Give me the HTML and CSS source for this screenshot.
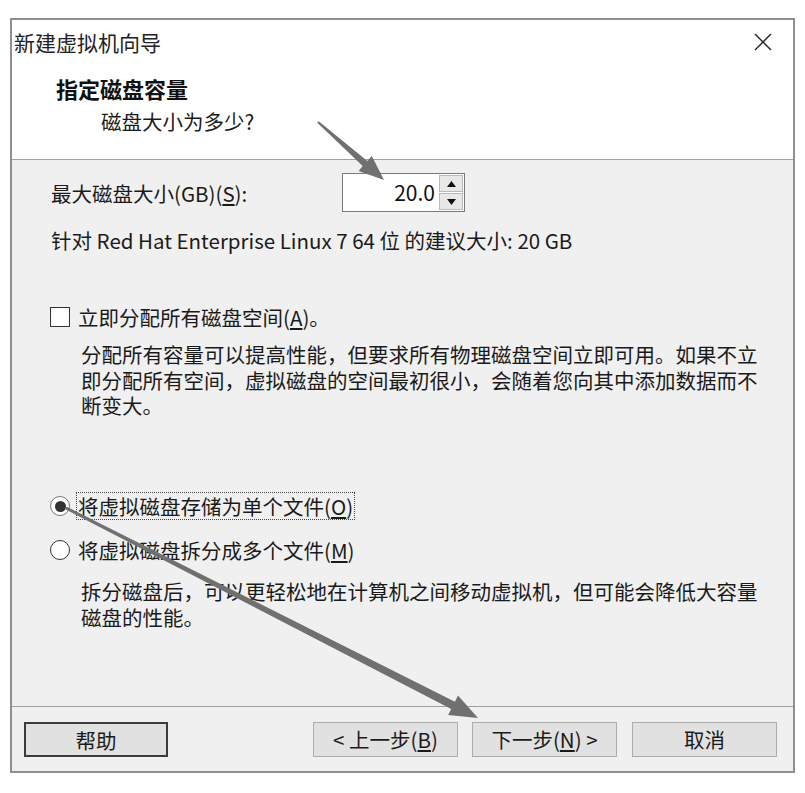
FILE: index.html
```html
<!DOCTYPE html>
<html lang="zh-CN">
<head>
<meta charset="utf-8">
<title>新建虚拟机向导</title>
<link rel="stylesheet" href="styles.css">
</head>
<body>
<div class="window">
  <div class="titlebar">
    <span class="title">新建虚拟机向导</span>
    <svg class="close" width="18" height="18" viewBox="0 0 18 18"><path d="M1 1 L17 17 M17 1 L1 17" stroke="#222" stroke-width="1.4" fill="none"/></svg>
  </div>
  <div class="header">
    <div class="heading">指定磁盘容量</div>
    <div class="subheading">磁盘大小为多少?</div>
  </div>
  <div class="content">
    <div class="size-row">
      <span class="size-label">最大磁盘大小(GB)(<u>S</u>):</span>
      <div class="spin">
        <div class="spin-value">20.0</div>
        <div class="spin-btns">
          <div class="spin-btn"><svg width="9" height="6" viewBox="0 0 9 6"><path d="M0 6 L4.5 0 L9 6 Z" fill="#111"/></svg></div>
          <div class="spin-btn"><svg width="9" height="6" viewBox="0 0 9 6"><path d="M0 0 L4.5 6 L9 0 Z" fill="#111"/></svg></div>
        </div>
      </div>
    </div>
    <div class="info">针对 Red Hat Enterprise Linux 7 64 位 的建议大小: 20 GB</div>
    <div class="option check-row">
      <span class="checkbox"></span>
      <span class="opt-label">立即分配所有磁盘空间(<u>A</u>)。</span>
    </div>
    <p class="desc desc-alloc">分配所有容量可以提高性能，但要求所有物理磁盘空间立即可用。如果不立<br>即分配所有空间，虚拟磁盘的空间最初很小，会随着您向其中添加数据而不<br>断变大。</p>
    <div class="option radio-row first">
      <span class="radio checked"><span class="dot"></span></span>
      <span class="opt-label focused">将虚拟磁盘存储为单个文件(<u>O</u>)</span>
    </div>
    <div class="option radio-row second">
      <span class="radio"></span>
      <span class="opt-label">将虚拟磁盘拆分成多个文件(<u>M</u>)</span>
    </div>
    <p class="desc desc-split">拆分磁盘后，可以更轻松地在计算机之间移动虚拟机，但可能会降低大容量<br>磁盘的性能。</p>
  </div>
  <div class="footer">
    <button class="btn btn-default">帮助</button>
    <div class="spacer"></div>
    <button class="btn">&lt; 上一步(<u>B</u>)</button>
    <button class="btn">下一步(<u>N</u>) &gt;</button>
    <button class="btn btn-cancel">取消</button>
  </div>
</div>
<svg class="annotations" width="805" height="793" viewBox="0 0 805 793">
  <polygon points="318.7,121.2 367.3,160.9 371.8,156 384,180 358.6,171 362.7,166.1 317.3,122.8" fill="#707070"/>
  <polygon points="66.7,506.7 454.9,701.7 458.0,695.5 478,718 448.1,715.1 451.2,708.9 65.3,509.3" fill="#707070"/>
</svg>
</body>
</html>
```
FILE: styles.css
```css
body {
  margin: 0;
  background: #fff;
  font-family: "Noto Sans CJK SC", "Noto Sans", sans-serif;
  color: #1a1a1a;
}

.window {
  margin: 18px 0 0 10px;
  width: 785px;
  height: 755px;
  box-sizing: border-box;
  border: 2px solid #8f8f8f;
  background: #f0f0f0;
  display: flex;
  flex-direction: column;
}

.titlebar {
  height: 44px;
  background: #fff;
  display: flex;
  align-items: center;
  justify-content: space-between;
  padding: 0 21px 0 2px;
  font-size: 21px;
  color: #222;
}

.title {
  line-height: 44px;
}

.header {
  background: #fff;
  height: 96px;
  box-sizing: border-box;
  padding: 10px 0 0 44px;
  border-bottom: 1px solid #a0a0a0;
  display: flex;
  flex-direction: column;
  gap: 5px;
}

.heading {
  font-size: 22px;
  font-weight: bold;
  line-height: 28px;
  color: #111;
}

.subheading {
  font-size: 20.5px;
  line-height: 28px;
  padding-left: 45px;
}

.content {
  flex: 1;
  padding: 13px 0 0 38px;
  font-size: 20.5px;
}

.size-row {
  display: flex;
  align-items: center;
  height: 39px;
}

.size-label {
  width: 292px;
  padding-left: 1px;
  box-sizing: border-box;
  line-height: 28px;
}

.spin {
  width: 123px;
  height: 39px;
  box-sizing: border-box;
  border: 1px solid #7a7a7a;
  background: #fff;
  display: flex;
}

.spin-value {
  flex: 1;
  text-align: right;
  padding-right: 3px;
  line-height: 37px;
  font-size: 21px;
  color: #111;
}

.spin-btns {
  width: 26px;
  display: flex;
  flex-direction: column;
  gap: 1px;
  padding: 1px;
  box-sizing: border-box;
}

.spin-btn {
  flex: 1;
  border: 1px solid #b9b9b9;
  background: #e8e8e8;
  display: flex;
  align-items: center;
  justify-content: center;
}

.info {
  margin-top: 14px;
  line-height: 28px;
  padding-left: 1px;
}

.option {
  display: flex;
  align-items: center;
  height: 28px;
}

.check-row {
  margin-top: 49px;
}

.checkbox {
  width: 20px;
  height: 20px;
  box-sizing: border-box;
  border: 1.5px solid #333;
  background: #fff;
  margin-right: 8px;
}

.opt-label {
  line-height: 26px;
}

.opt-label.focused {
  outline: 1px dotted #444;
  outline-offset: 0;
  padding: 0 1px 0 1px;
  margin-left: -1px;
}

.desc {
  margin: 11px 0 0 31px;
  line-height: 25.5px;
}

.radio-row.first {
  margin-top: 73.5px;
}

.radio-row.second {
  margin-top: 16px;
}

.radio {
  width: 20px;
  height: 20px;
  box-sizing: border-box;
  border: 1.5px solid #333;
  border-radius: 50%;
  background: #fff;
  margin-right: 8px;
  display: flex;
  align-items: center;
  justify-content: center;
}

.radio.checked {
  border-color: #777;
}

.radio .dot {
  width: 11px;
  height: 11px;
  border-radius: 50%;
  background: #333;
}

.desc-split {
  margin-top: 15px;
}

.footer {
  height: 65px;
  box-sizing: border-box;
  border-top: 1px solid #a0a0a0;
  padding: 15px 16px 0 12px;
  display: flex;
  align-items: flex-start;
  gap: 14px;
}

.spacer {
  flex: 1;
}

.btn {
  width: 145px;
  height: 35px;
  box-sizing: border-box;
  border: 1px solid #adadad;
  background: #e1e1e1;
  font-family: inherit;
  font-size: 20.5px;
  color: #1a1a1a;
  padding: 0;
  line-height: 33px;
}

.btn-default {
  width: 144px;
  border: 2px solid #3c3c3c;
}

.btn-cancel {
  margin-left: 1px;
}

.annotations {
  position: absolute;
  top: 0;
  left: 0;
  pointer-events: none;
}
```
